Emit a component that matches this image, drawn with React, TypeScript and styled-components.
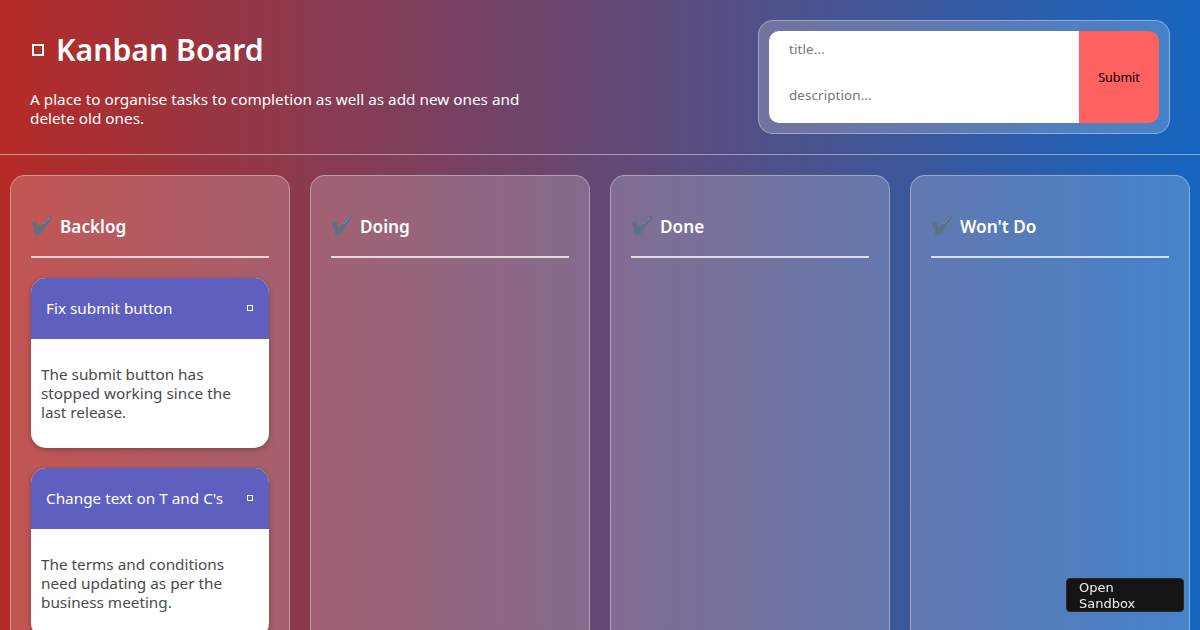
import React from 'react'
import styled, { createGlobalStyle } from 'styled-components'

const FONT = `'Noto Sans', 'Lato', sans-serif`

const GlobalStyle = createGlobalStyle`
  html, body {
    margin: 0;
    padding: 0;
    height: 630px;
    overflow: hidden;
  }
  body {
    background: linear-gradient(90deg, #b52b27, #1565c0);
    font-family: ${FONT};
    color: #fff;
  }
  * {
    box-sizing: border-box;
  }
`

const Page = styled.div`
  width: 1200px;
  height: 630px;
  overflow: hidden;
`

const Header = styled.header`
  height: 155px;
  display: flex;
  justify-content: space-between;
  padding: 20px 30px 0;
  border-bottom: 1px solid rgba(255, 255, 255, 0.45);
`

const Intro = styled.div`
  width: 500px;
`

const Title = styled.h1`
  margin: 8px 0 0;
  display: flex;
  align-items: center;
  gap: 12px;
  font-size: 30.2px;
  line-height: 43px;
  font-weight: 600;
`

const Square = styled.span<{ $size: number; $weight: number }>`
  flex: none;
  display: block;
  width: ${({ $size }) => $size}px;
  height: ${({ $size }) => $size}px;
  border: ${({ $weight }) => $weight}px solid #fff;
`

const TitleSquare = styled(Square)`
  margin-left: 2px;
`

const Lead = styled.p`
  margin: 19px 0 0;
  font-size: 15.3px;
  line-height: 19px;
`

const FormPanel = styled.form`
  width: 412px;
  height: 114px;
  padding: 10px;
  display: flex;
  border-radius: 15px;
  background: rgba(255, 255, 255, 0.2);
  border: 1px solid rgba(255, 255, 255, 0.35);
`

const Inputs = styled.div`
  flex: 1;
  display: flex;
  flex-direction: column;
  background: #fff;
  border-radius: 10px 0 0 10px;
`

const Field = styled.input`
  height: 46px;
  border: 0;
  outline: 0;
  background: transparent;
  padding: 0 20px 10px;
  font-family: ${FONT};
  font-size: 13.3px;
  letter-spacing: 0.15px;
  &::placeholder {
    color: #757575;
    opacity: 1;
  }
`

const Submit = styled.button`
  width: 80px;
  border: 0;
  padding: 0;
  background: #ff6161;
  color: #000;
  border-radius: 0 10px 10px 0;
  font-family: ${FONT};
  font-size: 12.5px;
`

const Board = styled.main`
  display: flex;
  gap: 20px;
  padding: 20px 10px 0;
`

const Column = styled.section`
  flex: 1;
  height: 600px;
  padding: 20px;
  border-radius: 15px;
  background: rgba(255, 255, 255, 0.2);
  border: 1px solid rgba(255, 255, 255, 0.35);
`

const ColumnTitle = styled.h2`
  margin: 0 0 20px;
  height: 62px;
  display: flex;
  align-items: center;
  gap: 5px;
  font-size: 17.2px;
  font-weight: 600;
  border-bottom: 2px solid rgba(255, 255, 255, 0.75);
`

const Card = styled.article`
  margin-bottom: 20px;
  border-radius: 15px;
  overflow: hidden;
  background: #fff;
  box-shadow: 0 2px 6px rgba(0, 0, 0, 0.25);
`

const CardHead = styled.div`
  height: 61px;
  padding: 0 15px 2px;
  display: flex;
  align-items: center;
  justify-content: space-between;
  background: #5f5fbf;
  font-size: 15.3px;
`

const CardSquare = styled(Square)`
  margin-right: 1px;
`

const CardBody = styled.p`
  margin: 0;
  height: 109px;
  padding: 26px 10px 0;
  color: #4a4a4a;
  font-size: 15.3px;
  line-height: 19px;
`

const SandboxLink = styled.a`
  position: fixed;
  left: 1066px;
  top: 578px;
  width: 118px;
  height: 34px;
  padding: 1px 12px;
  border-radius: 4px;
  background: #151515;
  border: 1px solid #2a2a2a;
  color: #eee;
  font-family: 'DejaVu Sans', sans-serif;
  font-size: 13px;
  line-height: 16px;
`

const CheckMark = () => (
  <svg width="24" height="24" viewBox="0 0 24 24" aria-hidden="true">
    <path d="M1 9 L4.5 7 L7.5 14 L19.5 1.5 L21.5 3 L8 21.5 L5 21.5 Z" fill="#5a7186" />
    <path d="M12.5 10 L19 3.2" fill="none" stroke="#a9b6c2" strokeWidth="0.8" strokeDasharray="1.4 1" />
  </svg>
)

const columns = [
  {
    name: 'Backlog',
    cards: [
      {
        title: 'Fix submit button',
        body: 'The submit button has stopped working since the last release.'
      },
      {
        title: "Change text on T and C's",
        body: 'The terms and conditions need updating as per the business meeting.'
      }
    ]
  },
  { name: 'Doing', cards: [] },
  { name: 'Done', cards: [] },
  { name: "Won't Do", cards: [] }
]

export default function App() {
  return (
    <Page>
      <GlobalStyle />
      <Header>
        <Intro>
          <Title>
            <TitleSquare $size={12} $weight={2} />
            Kanban Board
          </Title>
          <Lead>A place to organise tasks to completion as well as add new ones and delete old ones.</Lead>
        </Intro>
        <FormPanel>
          <Inputs>
            <Field placeholder="title..." />
            <Field placeholder="description..." />
          </Inputs>
          <Submit type="button">Submit</Submit>
        </FormPanel>
      </Header>
      <Board>
        {columns.map((column) => (
          <Column key={column.name}>
            <ColumnTitle>
              <CheckMark />
              {column.name}
            </ColumnTitle>
            {column.cards.map((card) => (
              <Card key={card.title}>
                <CardHead>
                  {card.title}
                  <CardSquare $size={6} $weight={1} />
                </CardHead>
                <CardBody>{card.body}</CardBody>
              </Card>
            ))}
          </Column>
        ))}
      </Board>
      <SandboxLink>Open Sandbox</SandboxLink>
    </Page>
  )
}
